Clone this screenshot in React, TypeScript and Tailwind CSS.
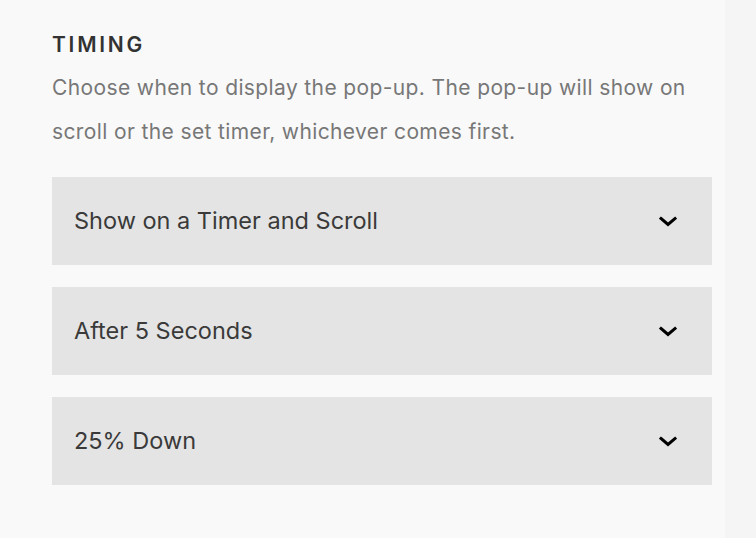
const options = ["Show on a Timer and Scroll", "After 5 Seconds", "25% Down"];

const Chevron = () => (
  <svg width="18" height="11" viewBox="0 0 18 11" fill="none" className="text-black">
    <path d="M2 2.5l7 6 7-6" stroke="currentColor" strokeWidth="3" strokeLinecap="square" />
  </svg>
);

export default function App() {
  return (
    <div className="flex min-h-[538px] w-[756px] bg-[#f9f9f9] font-['Inter',sans-serif]">
      <div className="w-[725px] pl-[52px] pr-[13px] pt-[30px]">
        <h2 className="text-[21px] font-semibold tracking-[0.13em] text-[#333] leading-[30px]">TIMING</h2>
        <p className="mt-[6px] text-[21px] tracking-[0.018em] leading-[44px] text-[#777]">
          Choose when to display the pop-up. The pop-up will show on scroll or the set timer, whichever comes first.
        </p>
        <div className="mt-[23px] flex flex-col gap-[22px]">
          {options.map((o) => (
            <div key={o} className="flex h-[88px] items-center justify-between bg-[#e4e4e4] pl-[22px] pr-[35px]">
              <span className="text-[23.5px] text-[#3a3a3a]">{o}</span>
              <Chevron />
            </div>
          ))}
        </div>
      </div>
      <div className="flex-1 bg-[#f5f5f5]" />
    </div>
  );
}
